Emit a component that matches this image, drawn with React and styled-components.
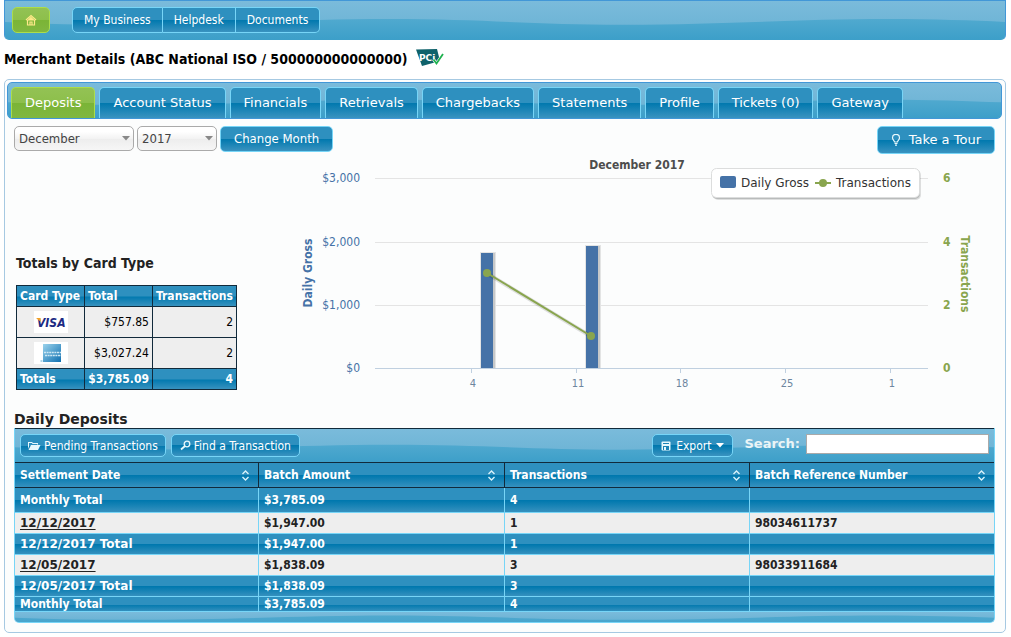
import React from 'react';
import styled, { createGlobalStyle, css } from 'styled-components';

const narrow = '"DejaVu Sans Condensed", "DejaVu Sans", Tahoma, sans-serif';
const wide = '"DejaVu Sans", Verdana, sans-serif';

const glass = 'linear-gradient(#2e90bf 0%, #2e90bf 50%, #0078ae 50%, #3a93c0 100%)';
const green = 'linear-gradient(#93c254 0%, #8dbf4b 50%, #7ab436 50%, #80b740 100%)';

const GlobalStyle = createGlobalStyle`
  *, *::before, *::after { box-sizing: border-box; }
  body { margin: 0; background: #fff; color: #222; font: 12px/16px ${narrow}; }
  button, input, select { font: inherit; margin: 0; }
  h1, h2 { margin: 0; }
`;

const Page = styled.div`
  padding: 0 5px 4px 4px;
`;

const wavy = css`
  position: relative;
  isolation: isolate;
  overflow: hidden;
  background: linear-gradient(#7abbdb, #68b1d3);
`;

const WaveSvg = styled.svg`
  position: absolute;
  inset: 0;
  z-index: -1;
  width: 100%;
  height: 100%;
`;

function Wave({ id, top = 0, height = 40 }) {
  return (
    <WaveSvg viewBox={`0 ${top} 1002 ${height}`} preserveAspectRatio="none" aria-hidden="true">
      <defs>
        <linearGradient id={id} x1="0" y1="0" x2="0" y2="1">
          <stop offset="0" stopColor="#50a9cf" />
          <stop offset="1" stopColor="#3d9fc9" />
        </linearGradient>
      </defs>
      <path
        fill={`url(#${id})`}
        d="M0 22 C40 24.500 80 25 120 25 C220 25 290 19 385 19 C480 19 530 25 620 25 C720 25 790 19 885 19 C930 19 970 20.500 1002 22 V40 H0 Z"
      />
    </WaveSvg>
  );
}

const TopBar = styled.header`
  ${wavy}
  display: flex;
  align-items: center;
  gap: 22px;
  height: 40px;
  padding: 0 7px;
  border: 1px solid #4297d7;
  border-bottom-color: #3d9fc9;
  border-radius: 0 0 5px 5px;
`;

const Button = styled.button`
  display: inline-flex;
  align-items: center;
  justify-content: center;
  gap: ${(p) => p.$gap || 3}px;
  height: ${(p) => p.$height || 26}px;
  padding: 0 ${(p) => p.$pad || 11}px;
  border: 1px solid #77d5f7;
  border-radius: 5px;
  background: ${glass};
  color: #fff;
  font: ${(p) => p.$size || 12}px/16px ${(p) => (p.$wide ? wide : narrow)};
  white-space: nowrap;
  cursor: pointer;
`;

const HomeButton = styled(Button)`
  width: 38px;
  padding: 0;
  border-color: #acdd4a;
  background: ${green};
`;

const NavGroup = styled.nav`
  display: flex;
  ${Button} + ${Button} { border-left: 0; }
  ${Button}:not(:first-child) { border-top-left-radius: 0; border-bottom-left-radius: 0; }
  ${Button}:not(:last-child) { border-top-right-radius: 0; border-bottom-right-radius: 0; }
`;

const Title = styled.h1`
  display: flex;
  align-items: center;
  gap: 8px;
  height: 37px;
  margin-bottom: 2px;
  color: #000;
  font: bold 14px/18px ${narrow};
`;

const Panel = styled.main`
  padding: 2px;
  border: 1px solid #a6c9e2;
  border-radius: 5px;
  background: #fcfdfd;
`;

const TabBar = styled.div`
  ${wavy}
  display: flex;
  align-items: flex-end;
  gap: 4px;
  height: 37px;
  padding: 0 3px;
  border: 1px solid #4297d7;
  border-radius: 5px;
  margin-right: 1px;
`;

const Tab = styled.a`
  height: 31px;
  padding: 0 13px;
  border: 1px solid ${(p) => (p.$active ? '#acdd4a' : '#77d5f7')};
  border-bottom: 0;
  border-radius: 5px 5px 0 0;
  background: ${(p) => (p.$active ? green : glass)};
  color: #fff;
  font: 13px/30px ${wide};
  text-decoration: none;
  white-space: nowrap;
`;

const Content = styled.div`
  padding: 7px 8px 7px 7px;
`;

const Controls = styled.div`
  display: flex;
  align-items: flex-start;
  gap: 3px;
`;

const Spacer = styled.span`
  flex: 1;
`;

const SelectBox = styled.label`
  position: relative;
  width: ${(p) => p.$width}px;
  svg { position: absolute; right: 4px; top: 10px; pointer-events: none; }
`;

const Select = styled.select`
  display: block;
  appearance: none;
  width: 100%;
  height: 25px;
  padding: 0 4px;
  border: 1px solid #aaa;
  border-radius: 5px;
  background: linear-gradient(#fff 20%, #f3f3f3 50%, #ededed 52%, #f6f6f6 100%);
  color: #444;
  font: 13px/20px ${narrow};
`;

const Summary = styled.section`
  display: flex;
`;

const CardTotals = styled.div`
  flex: 0 0 286px;
  padding: 100px 0 0 2px;
`;

const Heading = styled.h2`
  font: bold 14px/18px ${(p) => (p.$wide ? wide : narrow)};
`;

const CardTable = styled.table`
  width: 221px;
  margin-top: 13px;
  border-collapse: collapse;
  table-layout: fixed;
  color: #000;
  th, td { padding: 0 3px; border: 1px solid #112a3b; }
  td { text-align: right; background: #eee; }
  td:first-child { text-align: center; }
  svg { display: block; margin: -1px auto 0; }
`;

const GlassRow = styled.tr`
  height: 21px;
  && > * { background: ${glass}; color: #fff; font-weight: bold; text-align: left; }
  && > td { text-align: right; }
`;

const CardRow = styled.tr`
  height: 31px;
`;

const ChartBox = styled.div`
  flex: 1;
  min-width: 0;
  svg { display: block; width: 100%; height: auto; }
`;

const Deposits = styled.section`
  margin-top: 4px;
`;

const DepositBox = styled.div`
  border: 1px solid #77d5f7;
  border-top: 0;
  border-radius: 0 0 5px 5px;
  overflow: hidden;
`;

const Toolbar = styled.div`
  ${wavy}
  display: flex;
  gap: 5px;
  height: 35px;
  margin: 0 -1px;
  padding: 5px;
  border: 1px solid #112a3b;
`;

const SearchLabel = styled.label`
  display: flex;
  gap: 6px;
  margin-left: 6px;
  color: #eaf5f7;
  font: bold 13px/20px ${wide};
`;

const SearchInput = styled.input`
  width: 183px;
  height: 20px;
  padding: 0 3px;
  border: 1px solid #a9a9a9;
  background: #fff;
`;

const DepositTable = styled.table`
  width: 100%;
  border-collapse: separate;
  border-spacing: 0;
  table-layout: fixed;
  font-weight: bold;
  th, td { padding: 0 5px; text-align: left; border-bottom: 1px solid #77d5f7; }
  th + th, td + td { border-left: 1px solid #77d5f7; }
`;

const HeadRow = styled.tr`
  height: 25px;
  background: ${glass};
  color: #fff;
  && > th { border-color: #112a3b; }
`;

const HeadCell = styled.div`
  display: flex;
  align-items: center;
  justify-content: space-between;
  padding-right: 3px;
`;

const DataRow = styled.tr`
  height: ${(p) => p.$height || 21}px;
  line-height: ${(p) => (p.$height === 15 ? 14 : 16)}px;
  background: ${(p) => (p.$total ? glass : '#eee')};
  color: ${(p) => (p.$total ? '#fff' : '#222')};
`;

const DateCell = styled.td`
  font-family: ${wide};
`;

const DateLink = styled.a`
  color: #222;
  text-underline-offset: 2px;
`;

const Footer = styled.div`
  ${wavy}
  height: 10px;
`;

const HomeIcon = () => (
  <svg width="12" height="12" viewBox="0 0 12 12" fill="none" stroke="#ffe98a" strokeWidth="1.200" aria-hidden="true">
    <path d="M1 6 6 1.500 11 6M2.500 6v5h7V6M5 11V8h2v3" />
    <path d="M6 3.500 3.500 6h5Z" fill="#ffe98a" />
  </svg>
);

const PciLogo = () => (
  <svg width="28" height="20" viewBox="0 0 28 20" role="img" aria-label="PCI compliant">
    <path d="M0 .5 21 0l3 12L6 17Z" fill="#0f626b" />
    <text x="3" y="12" fill="#fff" fontFamily="DejaVu Sans" fontWeight="bold" fontSize="9">PCi</text>
    <path d="m17.500 10.500 3 4L27 5" fill="none" stroke="#fff" strokeWidth="3" />
    <path d="m17.500 10.500 3 4L27 5" fill="none" stroke="#1eb14e" strokeWidth="1.800" />
  </svg>
);

const BulbIcon = () => (
  <svg width="10" height="12" viewBox="0 0 10 12" fill="none" stroke="#e8f8fc" strokeWidth="1.200" aria-hidden="true">
    <path d="M3.500 8C3.500 6.500 1.500 6 1.500 3.800a3.300 3.300 0 0 1 7 0C8.500 6 6.500 6.500 6.500 8ZM3.500 9.500h3M4 11.200h2" />
  </svg>
);

const FolderIcon = () => (
  <svg width="13" height="10" viewBox="0 0 13 10" fill="#e8f8fc" aria-hidden="true">
    <path d="M0 8V1h4l1 1h5v1.500H9V3H4.500L3.800 2H1v3.500Z" />
    <path d="M3 4h9.500L10 9H.5Z" />
  </svg>
);

const FindIcon = () => (
  <svg width="11" height="11" viewBox="0 0 11 11" fill="none" stroke="#e8f8fc" aria-hidden="true">
    <circle cx="7" cy="4" r="2.800" strokeWidth="1.300" />
    <path d="M5 6 1 9.500" strokeWidth="1.800" />
  </svg>
);

const DiskIcon = () => (
  <svg width="10" height="10" viewBox="0 0 10 10" aria-hidden="true">
    <rect x=".5" y=".5" width="9" height="9" rx="1" fill="#e8f8fc" />
    <path d="M2 2h6v1H2zM2 5h6v4H2z" fill="#1c84b6" />
    <path d="M3 6h2v3H3z" fill="#e8f8fc" />
  </svg>
);

const DownIcon = ({ color = '#fff' }) => (
  <svg width="8" height="5" viewBox="0 0 8 5" aria-hidden="true">
    <path d="M0 0h8L4 4.500Z" fill={color} />
  </svg>
);

const SortIcon = () => (
  <svg width="9" height="11" viewBox="0 0 9 11" fill="none" stroke="#d8f2fb" strokeWidth="1.400" aria-hidden="true">
    <path d="m1.500 4 3-3 3 3M1.500 7l3 3 3-3" />
  </svg>
);

const VisaLogo = () => (
  <svg width="34" height="22" viewBox="0 0 34 22" role="img" aria-label="Visa">
    <path fill="#fff" d="M0 0h34v22H0z" />
    <text x="3" y="16" fill="#1c2a83" fontFamily="DejaVu Sans Condensed" fontWeight="bold" fontStyle="italic" fontSize="12">VISA</text>
    <path d="M2 7h4.500L7 11Z" fill="#f0a128" />
  </svg>
);

const AmexLogo = () => (
  <svg width="34" height="22" viewBox="0 0 34 22" role="img" aria-label="American Express">
    <defs>
      <linearGradient id="amex" x1="0" y1="0" x2="1" y2="1">
        <stop offset="0" stopColor="#9bd3ec" />
        <stop offset="1" stopColor="#0f6fb0" />
      </linearGradient>
    </defs>
    <path fill="#fff" d="M0 0h34v22H0z" />
    <path fill="url(#amex)" d="M9 2h18v18H9z" />
    <path d="M10 10.500h17M11 13.500h16" stroke="#cfe8f4" strokeWidth="1.600" strokeDasharray="2 .6" />
    <path d="M6.500 19h2" stroke="#5fb0d8" />
  </svg>
);

const BLUE = '#4572a7';
const OLIVE = '#89a54e';

const gridLines = [
  { y: 178, gross: '$3,000', count: 6 },
  { y: 242, gross: '$2,000', count: 4 },
  { y: 305, gross: '$1,000', count: 2 },
  { y: 368, gross: '$0', count: 0 },
];
const ticks = [[471, '4'], [576, '11'], [680, '18'], [785, '25'], [890, '1']];
const bars = [[481, 253], [586, 246]];
const points = [[487, 273], [591, 336]];

function DepositChart() {
  return (
    <svg viewBox="300 154 695 252" fontFamily={narrow} fontSize="12" role="img" aria-label="December 2017 daily gross and transactions">
      <text x="637" y="169" textAnchor="middle" fontWeight="bold" fill="#4d4d4d">December 2017</text>
      {gridLines.map((g) => (
        <g key={g.count}>
          <path d={`M375 ${g.y + 0.5}H928`} stroke={g.count ? '#e4e4e4' : '#c0d0e0'} />
          <text x="360" y={g.y + 4} textAnchor="end" fill={BLUE}>{g.gross}</text>
          <text x="943" y={g.y + 4} fontWeight="bold" fill={OLIVE}>{g.count}</text>
        </g>
      ))}
      {ticks.map(([x, label]) => (
        <g key={label}>
          <path d={`M${x + 0.5} 369v4`} stroke="#c0d0e0" />
          <text x={x + 2} y="387" textAnchor="middle" fontSize="11" fill="#6d869f">{label}</text>
        </g>
      ))}
      {bars.map(([x, y]) => (
        <g key={x}>
          <path d={`M${x - 1} ${y - 1}h16v${369 - y}h-16Z`} fill="#e3e4e4" />
          <path d={`M${x} ${y}h14v${368 - y}h-14Z`} fill="#c6c8c9" />
          <path d={`M${x} ${y}h12v${368 - y}h-12Z`} fill={BLUE} />
        </g>
      ))}
      <path d={`M${points[0].join(' ')}L${points[1].join(' ')}`} transform="translate(1 1)" stroke="#000" strokeOpacity=".12" strokeWidth="4" />
      <path d={`M${points[0].join(' ')}L${points[1].join(' ')}`} stroke={OLIVE} strokeWidth="2" />
      {points.map(([x, y]) => <circle key={x} cx={x} cy={y} r="4" fill={OLIVE} />)}
      <text transform="translate(312 273) rotate(-90)" textAnchor="middle" fontWeight="bold" fill={BLUE}>Daily Gross</text>
      <text transform="translate(961 274) rotate(90)" textAnchor="middle" fontWeight="bold" fill={OLIVE}>Transactions</text>
      <rect x="713" y="170" width="208" height="30" rx="5" fill="#000" fillOpacity=".12" />
      <rect x="712" y="169" width="208" height="30" rx="5" fill="#b9bbbb" />
      <rect x="711.500" y="168.500" width="208" height="29" rx="5" fill="#fff" stroke="#dcdddd" />
      <rect x="720" y="176" width="16" height="12" rx="2" fill={BLUE} />
      <path d="M815 183h16" stroke={OLIVE} strokeWidth="2" />
      <circle cx="823" cy="183" r="4" fill={OLIVE} />
      <g fontFamily={wide} fill="#333">
        <text x="741" y="187">Daily Gross</text>
        <text x="836" y="187">Transactions</text>
      </g>
    </svg>
  );
}

const tabs = ['Deposits', 'Account Status', 'Financials', 'Retrievals', 'Chargebacks', 'Statements', 'Profile', 'Tickets (0)', 'Gateway'];
const columns = ['Settlement Date', 'Batch Amount', 'Transactions', 'Batch Reference Number'];
const rows = [
  { cells: ['Monthly Total', '$3,785.09', '4', ''], total: true, height: 25 },
  { date: true, cells: ['12/12/2017', '$1,947.00', '1', '98034611737'] },
  { date: true, cells: ['12/12/2017 Total', '$1,947.00', '1', ''], total: true },
  { date: true, cells: ['12/05/2017', '$1,838.09', '3', '98033911684'] },
  { date: true, cells: ['12/05/2017 Total', '$1,838.09', '3', ''], total: true },
  { cells: ['Monthly Total', '$3,785.09', '4', ''], total: true, height: 15 },
];

function DepositRow({ row }) {
  const [first, ...rest] = row.cells;
  const First = row.date ? DateCell : 'td';
  return (
    <DataRow $total={row.total} $height={row.height}>
      <First>{row.total ? first : <DateLink href="#">{first}</DateLink>}</First>
      {rest.map((c, i) => <td key={i}>{c}</td>)}
    </DataRow>
  );
}

export default function App() {
  return (
    <Page>
      <GlobalStyle />
      <TopBar>
        <Wave id="waveTop" />
        <HomeButton aria-label="Home"><HomeIcon /></HomeButton>
        <NavGroup>
          <Button>My Business</Button>
          <Button>Helpdesk</Button>
          <Button>Documents</Button>
        </NavGroup>
      </TopBar>
      <Title>Merchant Details (ABC National ISO / 500000000000000) <PciLogo /></Title>
      <Panel>
        <TabBar>
          <Wave id="waveTabs" />
          {tabs.map((t, i) => <Tab key={t} href="#" $active={i === 0}>{t}</Tab>)}
        </TabBar>
        <Content>
          <Controls>
            <SelectBox $width={120}>
              <Select aria-label="Month" defaultValue="December"><option>December</option></Select>
              <DownIcon color="#888" />
            </SelectBox>
            <SelectBox $width={80}>
              <Select aria-label="Year" defaultValue="2017"><option>2017</option></Select>
              <DownIcon color="#888" />
            </SelectBox>
            <Button $size={13} $pad={13}>Change Month</Button>
            <Spacer />
            <Button $size={13} $pad={13} $gap={8} $height={28} $wide><BulbIcon />Take a Tour</Button>
          </Controls>
          <Summary>
            <CardTotals>
              <Heading>Totals by Card Type</Heading>
              <CardTable>
                <colgroup><col width="68" /><col width="68" /><col width="84" /></colgroup>
                <thead>
                  <GlassRow><th>Card Type</th><th>Total</th><th>Transactions</th></GlassRow>
                </thead>
                <tbody>
                  <CardRow><td><VisaLogo /></td><td>$757.85</td><td>2</td></CardRow>
                  <CardRow><td><AmexLogo /></td><td>$3,027.24</td><td>2</td></CardRow>
                </tbody>
                <tfoot>
                  <GlassRow><th>Totals</th><td>$3,785.09</td><td>4</td></GlassRow>
                </tfoot>
              </CardTable>
            </CardTotals>
            <ChartBox><DepositChart /></ChartBox>
          </Summary>
          <Deposits>
            <Heading $wide>Daily Deposits</Heading>
            <DepositBox>
              <Toolbar>
                <Wave id="waveTools" />
                <Button $height={23} $pad={7}><FolderIcon />Pending Transactions</Button>
                <Button $height={23} $pad={8}><FindIcon />Find a Transaction</Button>
                <Spacer />
                <Button $height={23} $pad={8} $gap={5}><DiskIcon />Export <DownIcon /></Button>
                <SearchLabel>Search: <SearchInput type="text" /></SearchLabel>
              </Toolbar>
              <DepositTable>
                <colgroup><col width="243" /><col width="246" /><col width="245" /><col /></colgroup>
                <thead>
                  <HeadRow>
                    {columns.map((c) => <th key={c}><HeadCell>{c}<SortIcon /></HeadCell></th>)}
                  </HeadRow>
                </thead>
                <tbody>
                  {rows.map((r, i) => <DepositRow key={i} row={r} />)}
                </tbody>
              </DepositTable>
              <Footer><Wave id="waveFoot" top={14} height={14} /></Footer>
            </DepositBox>
          </Deposits>
        </Content>
      </Panel>
    </Page>
  );
}
